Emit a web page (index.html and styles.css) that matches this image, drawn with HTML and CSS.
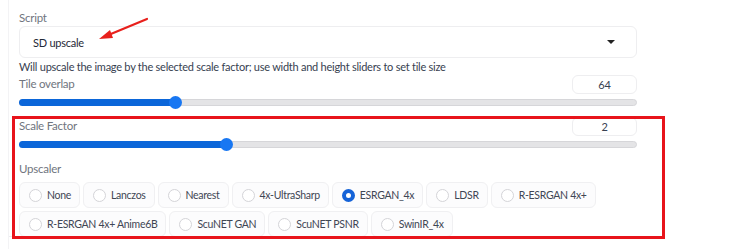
FILE: index.html
```html
<!DOCTYPE html>
<html lang="en">

<head>
  <meta charset="UTF-8">
  <meta name="viewport" content="width=device-width, initial-scale=1.0">
  <title>SD upscale</title>
  <link rel="stylesheet" href="styles.css">
</head>

<body>
  <div class="page">
    <div class="panel">
      <div class="field">
        <span class="label">Script</span>
        <div class="dropdown">
          <span>SD upscale</span>
          <span class="caret"></span>
        </div>
      </div>
      <p class="hint">Will upscale the image by the selected scale factor; use width and height sliders to set tile size</p>

      <div class="slider-block">
        <div class="slider-head">
          <span class="label">Tile overlap</span>
          <span class="num">64</span>
        </div>
        <div class="track"><div class="fill" style="width: 25.5%"></div></div>
      </div>

      <div class="slider-block scale">
        <div class="slider-head">
          <span class="label">Scale Factor</span>
          <span class="num">2</span>
        </div>
        <div class="track"><div class="fill" style="width: 33.7%"></div></div>
      </div>

      <div class="upscaler">
        <span class="label">Upscaler</span>
        <div class="radios">
          <label class="radio"><i></i>None</label>
          <label class="radio"><i></i>Lanczos</label>
          <label class="radio"><i></i>Nearest</label>
          <label class="radio"><i></i>4x-UltraSharp</label>
          <label class="radio checked"><i></i>ESRGAN_4x</label>
          <label class="radio"><i></i>LDSR</label>
          <label class="radio"><i></i>R-ESRGAN 4x+</label>
          <label class="radio"><i></i>R-ESRGAN 4x+ Anime6B</label>
          <label class="radio"><i></i>ScuNET GAN</label>
          <label class="radio"><i></i>ScuNET PSNR</label>
          <label class="radio"><i></i>SwinIR_4x</label>
        </div>
      </div>
    </div>

    <div class="mark"></div>
    <svg class="arrow" width="60" height="30" viewBox="0 0 60 30">
      <line x1="49" y1="3" x2="8" y2="20" stroke="#e8201c" stroke-width="2.2" stroke-linecap="round"/>
      <polygon points="1,23 12,14 15,22" fill="#e8201c"/>
    </svg>
  </div>
</body>

</html>
```

FILE: styles.css
```css
* {
  box-sizing: border-box;
}

body {
  margin: 0;
  background: #fff;
  font-family: "Source Sans Pro", Lato, "Noto Sans", sans-serif;
  font-size: 11px;
  letter-spacing: -0.25px;
  color: #374151;
}

.page {
  position: relative;
  width: 740px;
  height: 249px;
  overflow: hidden;
  border-left: 1px solid #f3f3f5;
  margin-left: 8px;
}

.panel {
  width: 628px;
  padding: 10px 0 0 10px;
  border-bottom: 1px solid #ececef;
  height: 237px;
}

.label {
  color: #70757e;
  font-size: 11.5px;
  line-height: 16px;
}

.field .label {
  display: block;
}

.dropdown {
  display: flex;
  justify-content: space-between;
  align-items: center;
  height: 32px;
  padding: 0 21px 0 13px;
  border: 1px solid #eeeef0;
  border-radius: 6px;
  color: #1f2937;
  font-size: 11px;
}

.caret {
  width: 0;
  height: 0;
  border-left: 4px solid transparent;
  border-right: 4px solid transparent;
  border-top: 4px solid #222;
}

.hint {
  margin: 1px 0 0;
  line-height: 16px;
  color: #374151;
}

.slider-head {
  display: flex;
  justify-content: space-between;
  align-items: center;
  height: 18px;
}

.num {
  width: 65px;
  height: 19px;
  border: 1px solid #eeeef0;
  border-radius: 6px;
  text-align: center;
  line-height: 17px;
  font-size: 11px;
  color: #374151;
}

.track {
  position: relative;
  height: 7px;
  margin-top: 6px;
  background: #e4e4e6;
  border: 1px solid #d6d6d9;
  border-radius: 4px;
}

.fill {
  position: relative;
  height: 7px;
  margin: -1px 0 0 -1px;
  background: #0b66d9;
  border-radius: 4px;
}

.fill::after {
  content: "";
  position: absolute;
  right: -6px;
  top: -3px;
  width: 13px;
  height: 13px;
  border-radius: 50%;
  background: #1877f2;
}

.scale {
  margin-top: 11px;
}

.upscaler {
  margin-top: 13px;
}

.radios {
  display: flex;
  flex-wrap: wrap;
  gap: 3px;
  margin-top: 5px;
}

.radio {
  display: flex;
  align-items: center;
  gap: 5px;
  height: 26px;
  padding: 0 8px 0 9px;
  background: #fcfcfd;
  border: 1px solid #f0f0f2;
  border-radius: 6px;
  font-size: 10.5px;
  letter-spacing: -0.3px;
  color: #3f4654;
}

.radio i {
  width: 13px;
  height: 13px;
  border: 1px solid #d4d4d8;
  border-radius: 50%;
  background: #fff;
}

.radio.checked i {
  border: 4px solid #1563d8;
}

.mark {
  position: absolute;
  left: 3px;
  top: 116px;
  width: 653px;
  height: 123px;
  border: 3px solid #e8141b;
}

.arrow {
  position: absolute;
  left: 89px;
  top: 16px;
}
```
